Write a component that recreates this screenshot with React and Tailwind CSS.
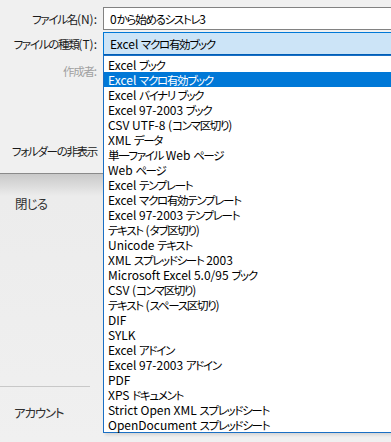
import React from 'react';

const fileTypes = [
  'Excel ブック',
  'Excel マクロ有効ブック',
  'Excel バイナリ ブック',
  'Excel 97-2003 ブック',
  'CSV UTF-8 (コンマ区切り)',
  'XML データ',
  '単一ファイル Web ページ',
  'Web ページ',
  'Excel テンプレート',
  'Excel マクロ有効テンプレート',
  'Excel 97-2003 テンプレート',
  'テキスト (タブ区切り)',
  'Unicode テキスト',
  'XML スプレッドシート 2003',
  'Microsoft Excel 5.0/95 ブック',
  'CSV (コンマ区切り)',
  'テキスト (スペース区切り)',
  'DIF',
  'SYLK',
  'Excel アドイン',
  'Excel 97-2003 アドイン',
  'PDF',
  'XPS ドキュメント',
  'Strict Open XML スプレッドシート',
  'OpenDocument スプレッドシート',
];

const selected = 1;

// Yu Gothic UI kana run much narrower than Noto's, so squeeze the CJK runs only
function Jp({ text, cjk = 'text-[11.5px] tracking-[-1.3px]' }) {
  const parts = text.split(/([\u3000-\u30ff\u4e00-\u9fff\uff00-\uffef]+)/);
  return (
    <span>
      {parts.map((p, i) =>
        i % 2 === 1 ? (
          <span key={i} className={cjk}>
            {p}
          </span>
        ) : (
          p
        )
      )}
    </span>
  );
}

function Label({ text, muted = false }) {
  return (
    <div className={`w-[103px] shrink-0 pr-[6px] text-right whitespace-nowrap ${muted ? 'text-[#a0a0a0]' : 'text-[#1a1a1a]'}`}>
      <Jp text={text} />
    </div>
  );
}

export default function App() {
  return (
    <div className="relative w-[391px] h-[442px] overflow-hidden bg-[#f0f0f0] text-[12px] leading-[15px] font-['Noto_Sans_CJK_JP',sans-serif] [font-feature-settings:'palt']">
      {/* Save dialog */}
      <div className="h-[174px] flex flex-col pt-[7px] border-b border-[#8a8a8a]">
        <div className="flex items-center">
          <Label text="ファイル名(N):" />
          <div className="flex-1 h-[23px] flex items-center pl-[6px] bg-white border border-[#828282] border-r-0 text-black whitespace-nowrap">
            <Jp text="0から始めるシストレ3" />
          </div>
        </div>
        <div className="flex items-center mt-[2px]">
          <Label text="ファイルの種類(T):" />
          <div className="flex-1 h-[24px] flex items-center pl-[6px] bg-[#cce4f7] border border-[#0078d7] border-b-2 border-b-[#005fb8] border-r-0 text-black whitespace-nowrap">
            <Jp text="Excel マクロ有効ブック" />
          </div>
        </div>
        <div className="flex items-center mt-[7px]">
          <Label text="作成者:" muted />
        </div>
        <div className="flex-1" />
        <div className="flex items-center h-[28px] mb-[8px]">
          <Label text="フォルダーの非表示" />
        </div>
      </div>

      {/* Backstage nav behind the dialog */}
      <div className="h-[267px] flex flex-col bg-gradient-to-b from-[#c9c9c9] via-[#ececec] via-[22px] to-[#f0f0f0] text-[13px] text-[#303030]">
        <div className="pl-[15px] mt-[21px] leading-[18px]">
          <Jp text="閉じる" cjk="text-[12.5px] tracking-[-0.8px]" />
        </div>
        <div className="flex-1" />
        <div className="w-[90px] h-px bg-[#c8c8c8]" />
        <div className="pl-[14px] mt-[17px] mb-[19px] leading-[18px]">
          <Jp text="アカウント" cjk="text-[12.5px] tracking-[-1.2px]" />
        </div>
      </div>

      {/* Open dropdown list */}
      <ul className="absolute left-[103px] top-[55px] w-[300px] bg-white border border-[#1a6fc4] pt-px shadow-[2px_2px_3px_rgba(0,0,0,0.12)]">
        {fileTypes.map((t, i) => (
          <li
            key={t}
            className={`h-[15px] pl-[4px] whitespace-nowrap ${i === selected ? 'bg-[#0078d7] text-white' : 'text-black'}`}
          >
            <Jp text={t} />
          </li>
        ))}
      </ul>
    </div>
  );
}
